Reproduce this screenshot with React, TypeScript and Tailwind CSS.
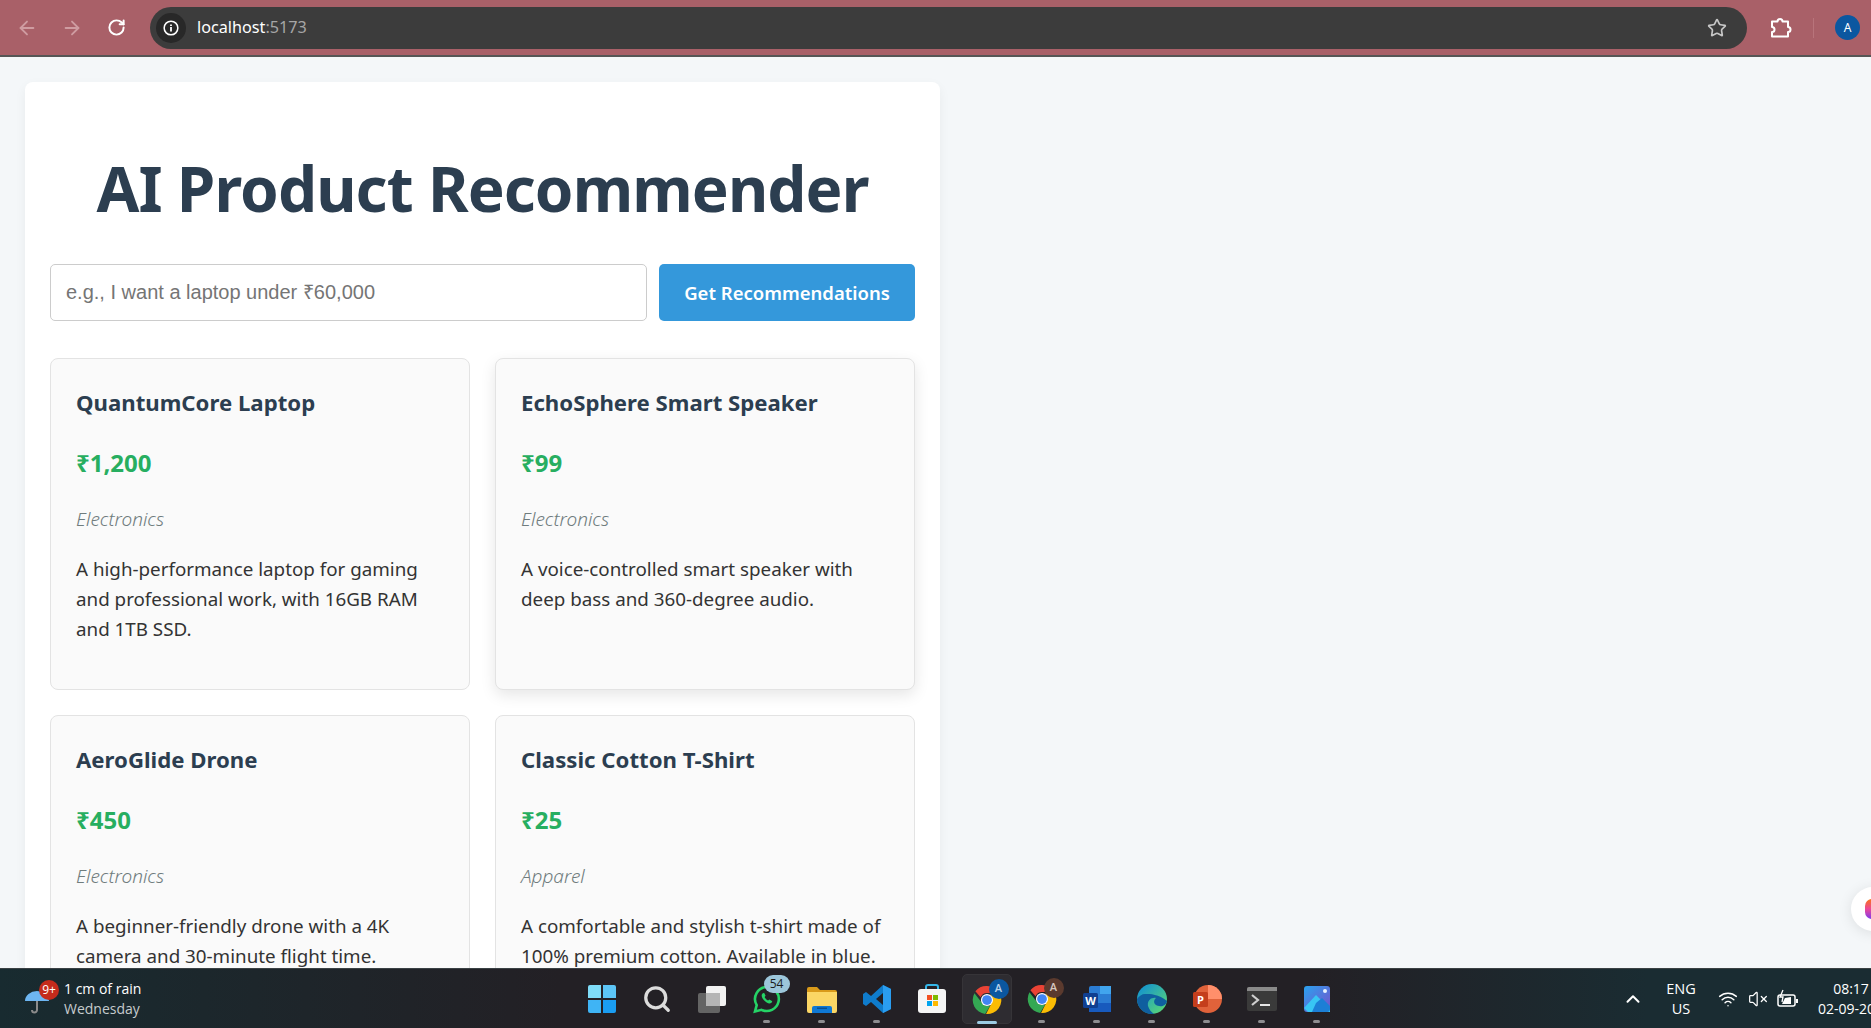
import { ArrowLeft, ArrowRight, RotateCw, Star, ChevronUp, Search, VolumeX, Wifi } from "lucide-react";
import type { ReactNode } from "react";

interface Product {
  name: string;
  price: string;
  category: string;
  description: string;
  hovered?: boolean;
}

const products: Product[] = [
  {
    name: "QuantumCore Laptop",
    price: "₹1,200",
    category: "Electronics",
    description: "A high-performance laptop for gaming and professional work, with 16GB RAM and 1TB SSD.",
  },
  {
    name: "EchoSphere Smart Speaker",
    price: "₹99",
    category: "Electronics",
    description: "A voice-controlled smart speaker with deep bass and 360-degree audio.",
    hovered: true,
  },
  {
    name: "AeroGlide Drone",
    price: "₹450",
    category: "Electronics",
    description: "A beginner-friendly drone with a 4K camera and 30-minute flight time.",
  },
  {
    name: "Classic Cotton T-Shirt",
    price: "₹25",
    category: "Apparel",
    description: "A comfortable and stylish t-shirt made of 100% premium cotton. Available in blue.",
  },
];

const ProductCard = ({ product }: { product: Product }) => (
  <div
    className={`h-[332px] rounded-lg border border-[#e3e3e3] bg-[#fafafa] px-[25px] pt-[25px] ${
      product.hovered ? "shadow-[0_5px_15px_rgba(0,0,0,0.1)]" : ""
    }`}
  >
    <h3 className="text-[22.2px] leading-[38px] font-bold text-[#2c3e50]">{product.name}</h3>
    <p className="mt-[22px] text-[24px] leading-[38px] font-bold text-[#27ae60]">{product.price}</p>
    <p className="mt-[19px] text-[19px] leading-[36px] font-light text-[#6f7c7d] italic">{product.category}</p>
    <p className="mt-[17px] text-[18.8px] leading-[30px] text-[#333]">{product.description}</p>
  </div>
);

const ChromeIcon = () => (
  <svg viewBox="0 0 32 32" className="h-[30px] w-[30px]">
    <path d="M16 1a15 15 0 0 1 13 7.500H16a7.500 7.500 0 0 0-6.900 4.600L3.600 6.700A15 15 0 0 1 16 1z" fill="#ea4335" />
    <path d="M2.600 8.800A15 15 0 0 0 14 30.900l5.600-9.200a7.500 7.500 0 0 1-9.900-3.900z" fill="#34a853" />
    <path d="M30 10h-10.500a7.500 7.500 0 0 1 1.200 9.600L15 31a15 15 0 0 0 15-21z" fill="#fbbc04" />
    <circle cx="16" cy="16" r="6.500" fill="#fff" />
    <circle cx="16" cy="16" r="5.200" fill="#4285f4" />
  </svg>
);

const BadgeLetter = ({ className }: { className: string }) => (
  <span
    className={`absolute top-[-5px] left-[18px] flex h-[20px] w-[20px] items-center justify-center rounded-full text-[11px] font-semibold ${className}`}
  >
    A
  </span>
);

const TaskbarItem = ({
  children,
  dot = true,
  active = false,
}: {
  children: ReactNode;
  dot?: boolean;
  active?: boolean;
}) => (
  <div className="flex h-full w-[55px] flex-col items-center justify-center">
    <div
      className={`flex h-[50px] w-[50px] flex-col items-center rounded-[5px] pt-[9px] ${
        active ? "border border-[#363438] bg-[#2e2c31]" : ""
      }`}
    >
      <div className="relative flex h-[32px] w-[32px] shrink-0 items-center justify-center">{children}</div>
      {dot && (
        <span
          className={`mt-[5px] h-[3px] shrink-0 rounded-full ${active ? "w-[20px] bg-[#9ccbe3]" : "w-[7px] bg-[#8e8d90]"}`}
        />
      )}
    </div>
  </div>
);

export default function App() {
  return (
    <div className="relative flex h-screen flex-col overflow-hidden bg-[#f4f7f9] font-['Noto_Sans',sans-serif]">
      {/* browser toolbar */}
      <div className="flex h-[57px] shrink-0 items-center border-b-2 border-b-[#565656] bg-[#a96068] pr-[11px] pl-[16px]">
        <ArrowLeft className="h-[22px] w-[22px] text-[#cf9ca1]" strokeWidth={2} />
        <ArrowRight className="ml-[23px] h-[22px] w-[22px] text-[#cf9ca1]" strokeWidth={2} />
        <RotateCw className="ml-[24px] h-[19px] w-[19px] text-white" strokeWidth={2.5} />
        <div className="ml-[24px] flex h-[42px] flex-1 items-center rounded-full bg-[#3c3c3c] pr-[20px] pl-[6px]">
          <div className="flex h-[30px] w-[30px] items-center justify-center rounded-full bg-[#282828]">
            <svg viewBox="0 0 20 20" className="h-[18px] w-[18px]" fill="none" stroke="#fff" strokeWidth="1.700">
              <circle cx="10" cy="10" r="7.600" />
              <path d="M10 9v5M10 6v1.800" strokeWidth="2" />
            </svg>
          </div>
          <span className="ml-[11px] flex-1 text-[16.2px] text-white">
            localhost<span className="text-[#a5a5a5]">:5173</span>
          </span>
          <Star className="h-[20px] w-[20px] text-[#c7c7c7]" strokeWidth={2} />
        </div>
        <svg viewBox="0 0 24 24" className="ml-[22px] h-[24px] w-[24px]" fill="none" stroke="#fff" strokeWidth="2" strokeLinejoin="round">
          <path d="M3 5.500h5.500a2.500 2.500 0 0 1 5 0H19v5.500a2.500 2.500 0 0 1 0 5v4.500H3v-4.500a2.500 2.500 0 0 0 0-5z" />
        </svg>
        <div className="ml-[20px] h-[20px] w-px bg-[#b8747b]" />
        <div className="ml-[21px] flex h-[25px] w-[25px] items-center justify-center rounded-full bg-[#0b57a0] text-[12px] text-white">
          A
        </div>
      </div>

      {/* page */}
      <main className="relative min-h-0 flex-1 overflow-hidden">
        <div className="mt-[25px] ml-[25px] w-[915px] rounded-lg bg-white p-[25px] shadow-[0_4px_12px_rgba(0,0,0,0.05)]">
          <h1 className="mt-[36px] text-center text-[62px] leading-[90px] font-bold tracking-[-0.9px] text-[#2c3e50]">
            AI Product Recommender
          </h1>
          <div className="mt-[31px] flex gap-[12px]">
            <input
              readOnly
              placeholder="e.g., I want a laptop under ₹60,000"
              className="h-[57px] flex-1 rounded-[5px] border border-[#ccc] px-[15px] font-['Liberation_Sans',sans-serif] text-[20px] placeholder:text-[#757575]"
            />
            <button className="h-[57px] w-[256px] rounded-[5px] bg-[#3498db] text-[18.5px] font-semibold text-white">
              Get Recommendations
            </button>
          </div>
          <div className="mt-[37px] grid grid-cols-2 gap-x-[25px] gap-y-[25px]">
            {products.map((product) => (
              <ProductCard key={product.name} product={product} />
            ))}
          </div>
        </div>
        {/* floating extension bubble */}
        <div className="absolute top-[830px] left-[1851px] flex h-[44px] w-[44px] items-center rounded-full bg-white pl-[14px] shadow-[0_2px_14px_rgba(0,0,0,0.1)]">
          <span className="h-[20px] w-[14px] rounded-full bg-[linear-gradient(180deg,#f97316,#ec4899_50%,#7c3aed)]" />
        </div>
      </main>

      {/* windows taskbar */}
      <div className="flex h-[60px] shrink-0 border-t border-t-[#3a4144] bg-[linear-gradient(90deg,#182b30_0%,#232025_30%,#232025_70%,#1a2c32_88%)] font-['Open_Sans',sans-serif]">
        <div className="flex w-[574px] items-center pl-[24px]">
          <div className="relative h-[32px] w-[36px]">
            <svg viewBox="0 0 26 28" className="absolute top-[4px] left-0 h-[28px] w-[26px]">
              <path d="M1 14a12 10 0 0 1 24 0z" fill="#6db6f2" />
              <path d="M13 14v9a2.500 2.500 0 0 1-5 0" fill="none" stroke="#8b8b8b" strokeWidth="2" />
            </svg>
            <span className="absolute top-[-3px] left-[15px] flex h-[20px] w-[20px] items-center justify-center rounded-full bg-[#c42b1c] text-[12px] text-white">
              9+
            </span>
          </div>
          <div className="ml-[4px] text-[14px] leading-[20px]">
            <div className="text-white">1 cm of rain</div>
            <div className="text-[#c6cbcd]">Wednesday</div>
          </div>
        </div>

        <div className="flex">
          <TaskbarItem dot={false}>
            <svg viewBox="0 0 30 30" className="h-[30px] w-[30px]">
              <path d="M1 3a2 2 0 0 1 2-2h11v13H1z" fill="#7fdcf8" />
              <path d="M16 1h11a2 2 0 0 1 2 2v11H16z" fill="#5cc5f6" />
              <path d="M1 16h13v13H3a2 2 0 0 1-2-2z" fill="#3fb4f5" />
              <path d="M16 16h13v11a2 2 0 0 1-2 2H16z" fill="#1a9df2" />
            </svg>
          </TaskbarItem>
          <TaskbarItem dot={false}>
            <Search className="h-[30px] w-[30px] text-[#dcdcdc]" strokeWidth={2.600} />
          </TaskbarItem>
          <TaskbarItem dot={false}>
            <svg viewBox="0 0 30 30" className="h-[30px] w-[30px]">
              <rect x="9" y="2" width="20" height="20" rx="2" fill="#f2f2f2" />
              <rect x="1" y="9" width="22" height="20" rx="2" fill="#6b6b6b" fillOpacity="0.900" />
              <rect x="9" y="9" width="14" height="13" fill="#b5b5b5" />
            </svg>
          </TaskbarItem>
          <TaskbarItem>
            <svg viewBox="0 0 30 30" className="h-[30px] w-[30px]">
              <path d="M15 3a12 12 0 0 0-10.300 18.100L3 27.500l6.600-1.700A12 12 0 1 0 15 3z" fill="none" stroke="#25d366" strokeWidth="2.600" />
              <path d="M10.500 9.500c-1.500 1.500-1 4 1.500 6.800s5.500 4 7.500 2.400l.8-1.500-3-1.800-1.200 1.200c-1.500-.6-3-2.200-3.500-3.600l1-1.200-1.500-3z" fill="#25d366" />
            </svg>
            <span className="absolute top-[-8px] left-[13px] flex h-[18px] w-[26px] items-center justify-center rounded-full bg-[#9cc6da] text-[12px] text-[#1b1b1b]">
              54
            </span>
          </TaskbarItem>
          <TaskbarItem>
            <svg viewBox="0 0 30 30" className="h-[30px] w-[30px]">
              <path d="M0 5a2 2 0 0 1 2-2h8l3 3h15a2 2 0 0 1 2 2v3H0z" fill="#d99a1a" />
              <path d="M0 8h30v19a2 2 0 0 1-2 2H2a2 2 0 0 1-2-2z" fill="#fbd665" />
              <path d="M5 24a2 2 0 0 1 2-2h16a2 2 0 0 1 2 2v5H5z" fill="#0f78d4" />
              <rect x="10" y="23.500" width="10" height="1.500" fill="#0a4f91" />
            </svg>
          </TaskbarItem>
          <TaskbarItem>
            <svg viewBox="0 0 30 30" className="h-[30px] w-[30px]">
              <path d="M21 1l8 4v20l-8 4L9 18l-5 4-3-2v-10l3-2 5 4z" fill="#0f7ccc" />
              <path d="M21 1l8 4v20l-8 4z" fill="#2a9df0" />
              <path d="M21 9l-7 6 7 6z" fill="#232025" />
            </svg>
          </TaskbarItem>
          <TaskbarItem dot={false}>
            <svg viewBox="0 0 30 30" className="h-[30px] w-[30px]">
              <path d="M9 6V3a2 2 0 0 1 2-2h8a2 2 0 0 1 2 2v3" fill="none" stroke="#35b6e8" strokeWidth="2" />
              <rect x="1" y="5" width="28" height="24" rx="3" fill="#f5f5f5" />
              <rect x="10" y="11" width="5" height="5" fill="#f25022" />
              <rect x="16" y="11" width="5" height="5" fill="#7fba00" />
              <rect x="10" y="17" width="5" height="5" fill="#00a4ef" />
              <rect x="16" y="17" width="5" height="5" fill="#ffb900" />
            </svg>
          </TaskbarItem>
          <TaskbarItem active>
            <ChromeIcon />
            <BadgeLetter className="bg-[#0b57a0] text-[#b9d2ea]" />
          </TaskbarItem>
          <TaskbarItem>
            <ChromeIcon />
            <BadgeLetter className="bg-[#5b3a2e] text-[#d8c8c0]" />
          </TaskbarItem>
          <TaskbarItem>
            <svg viewBox="0 0 30 30" className="h-[30px] w-[30px]">
              <rect x="7" y="2" width="22" height="26" rx="2" fill="#2b7cd3" />
              <rect x="18" y="2" width="11" height="8" fill="#41a5ee" />
              <rect x="7" y="19" width="22" height="9" fill="#185abd" />
              <rect x="1" y="9" width="15" height="15" rx="1.500" fill="#103f91" />
              <text x="8.500" y="20.500" textAnchor="middle" fontSize="11" fontWeight="700" fill="#fff">W</text>
            </svg>
          </TaskbarItem>
          <TaskbarItem>
            <svg viewBox="0 0 30 30" className="h-[30px] w-[30px]">
              <defs>
                <linearGradient id="edgeTop" x1="0" y1="0" x2="1" y2="1">
                  <stop offset="0" stopColor="#0c8bd9" />
                  <stop offset="1" stopColor="#5fdc6e" />
                </linearGradient>
              </defs>
              <circle cx="15" cy="15" r="15" fill="url(#edgeTop)" />
              <path d="M30 17c-1 6-8 6-11 4-3-2-2-5 0-7-5-1-9 3-8 8 1 3 3 6 6 8A15 15 0 0 1 0 15c2-3 5-5 8-5 5 0 14 0 22 7z" fill="#0f5f9f" />
            </svg>
          </TaskbarItem>
          <TaskbarItem>
            <svg viewBox="0 0 30 30" className="h-[30px] w-[30px]">
              <circle cx="16" cy="15" r="14" fill="#e0623a" />
              <path d="M16 1a14 14 0 0 1 14 14H16z" fill="#ff8f6b" />
              <rect x="1" y="8" width="15" height="15" rx="1.500" fill="#c43e1c" />
              <text x="8.500" y="19.500" textAnchor="middle" fontSize="11" fontWeight="700" fill="#fff">P</text>
            </svg>
          </TaskbarItem>
          <TaskbarItem>
            <svg viewBox="0 0 30 30" className="h-[30px] w-[30px]">
              <rect x="0" y="3" width="30" height="24" rx="2" fill="#3a3a3a" />
              <path d="M0 5a2 2 0 0 1 2-2h28v4H0z" fill="#8a8a8a" />
              <path d="M5 11l6 5-6 5" fill="none" stroke="#cfcfcf" strokeWidth="2.200" />
              <rect x="13" y="20" width="10" height="2" fill="#e5e5e5" />
            </svg>
          </TaskbarItem>
          <TaskbarItem>
            <svg viewBox="0 0 30 30" className="h-[30px] w-[30px]">
              <defs>
                <linearGradient id="photoBg" x1="0" y1="0" x2="1" y2="1">
                  <stop offset="0" stopColor="#29a3f0" />
                  <stop offset="1" stopColor="#7a4fc9" />
                </linearGradient>
              </defs>
              <rect x="2" y="2" width="26" height="26" rx="3" fill="url(#photoBg)" />
              <circle cx="23" cy="7" r="2" fill="#e8f4ff" />
              <path d="M2 24l12-13 14 14v3H6z" fill="#38c6f4" />
              <path d="M14 19l6-5 8 8v3a3 3 0 0 1-3 3H10z" fill="#1c7fd6" />
            </svg>
          </TaskbarItem>
        </div>

        <div className="flex min-w-0 flex-1 items-center overflow-hidden">
          <ChevronUp className="ml-[278px] h-[22px] w-[22px] shrink-0 text-white" strokeWidth={2.200} />
          <div className="ml-[21px] w-[32px] shrink-0 text-center text-[14.5px] leading-[20px] text-white">
            <div>ENG</div>
            <div>US</div>
          </div>
          <Wifi className="ml-[21px] h-[20px] w-[20px] shrink-0 text-white" strokeWidth={1.800} />
          <VolumeX className="ml-[10px] h-[20px] w-[20px] shrink-0 text-white" strokeWidth={1.500} />
          <svg viewBox="0 0 22 20" className="ml-[9px] h-[20px] w-[22px] shrink-0" fill="none" stroke="#fff" strokeWidth="1.500">
            <rect x="1" y="6" width="17" height="11" rx="2" />
            <path d="M20 10v4" strokeWidth="2" />
            <path d="M5 15l3-6 6-1v7z" fill="#fff" stroke="none" />
            <path d="M6 1L3 8h3l-1 5" strokeWidth="1.300" />
          </svg>
          <div className="ml-[10px] w-[84px] shrink-0 text-center text-[14px] leading-[20px] whitespace-nowrap text-white">
            <div>08:17</div>
            <div className="pl-[7px]">02-09-2025</div>
          </div>
        </div>
      </div>
    </div>
  );
}
